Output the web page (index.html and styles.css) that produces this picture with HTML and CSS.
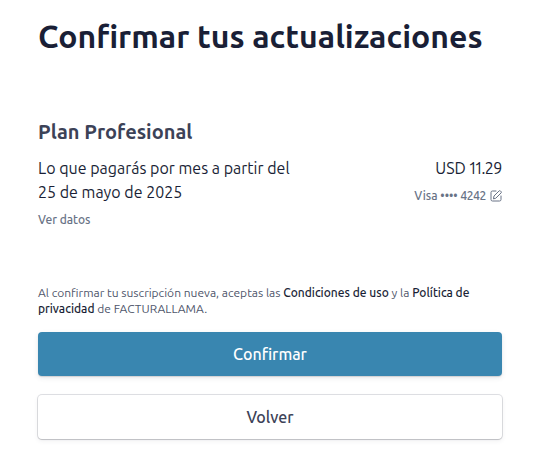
FILE: index.html
```html
<!DOCTYPE html>
<html lang="es">
<head>
    <meta charset="UTF-8">
    <meta name="viewport" content="width=device-width, initial-scale=1.0">
    <title>Confirmar tus actualizaciones</title>
    <link rel="stylesheet" href="styles.css">
</head>
<body>

<main class="container">
    <h1>Confirmar tus actualizaciones</h1>

    <section class="plan">
        <h2>Plan Profesional</h2>
        <div class="plan-row">
            <div class="plan-info">
                <p class="plan-text">Lo que pagarás por mes a partir del 25 de mayo de 2025</p>
                <a class="small-link" href="#datos">Ver datos</a>
            </div>
            <div class="plan-price">
                <p class="plan-text">USD 11.29</p>
                <a class="small-link card-link" href="#tarjeta">
                    <span>Visa •••• 4242</span>
                    <svg class="edit-icon" viewBox="0 0 24 24" aria-hidden="true">
                        <path d="M12 2H5a3 3 0 0 0-3 3v14a3 3 0 0 0 3 3h14a3 3 0 0 0 3-3v-7"/>
                        <path d="M7 17l1-5L18 2a2 2 0 0 1 3 0l1 1a2 2 0 0 1 0 3L12 16z"/>
                    </svg>
                </a>
            </div>
        </div>
    </section>

    <p class="terms">Al confirmar tu suscripción nueva, aceptas las <a href="#condiciones">Condiciones de uso</a> y la <a href="#privacidad">Política de privacidad</a> de FACTURALLAMA.</p>

    <div class="actions">
        <button class="btn confirm-btn" type="button">Confirmar</button>
        <button class="btn back-btn" type="button">Volver</button>
    </div>
</main>

</body>
</html>
```
FILE: styles.css
```css
body {
    background-color: #fff;
    color: #1a1f36;
    font-family: Ubuntu, 'Noto Sans', sans-serif;
    margin: 0;
}

.container {
    padding: 16px 31px 24px 38px;
}

h1, h2, p {
    margin: 0;
}

h1 {
    font-size: 32px;
    font-weight: 600;
    line-height: 40px;
}

h2 {
    color: #3c4257;
    font-size: 20px;
    font-weight: 600;
    line-height: 28px;
}

a {
    color: #1a1f36;
    font-weight: 500;
    text-decoration: none;
}

.plan {
    margin-top: 62px;
}

.plan-row {
    display: flex;
    justify-content: space-between;
    gap: 24px;
    margin-top: 10px;
}

.plan-info {
    flex: 0 1 270px;
}

.plan-text {
    font-size: 16px;
    font-weight: 400;
    line-height: 24px;
}

.plan-price {
    font-variant-numeric: proportional-nums;
    text-align: right;
}

.small-link {
    color: #697386;
    display: inline-block;
    font-size: 12px;
    line-height: 16px;
    margin-top: 8px;
}

.card-link {
    display: flex;
    align-items: center;
    justify-content: flex-end;
    gap: 4px;
}

.edit-icon {
    width: 12px;
    height: 12px;
    fill: none;
    stroke: #697386;
    stroke-width: 2px;
    stroke-linecap: round;
    stroke-linejoin: round;
}

.terms {
    color: #4f566b;
    font-size: 12px;
    font-weight: 400;
    line-height: 16px;
    margin-top: 57px;
}

.actions {
    display: grid;
    gap: 19px;
    margin-top: 15px;
}

.btn {
    border: none;
    border-radius: 4px;
    cursor: pointer;
    font-family: inherit;
    font-size: 16px;
    font-weight: 500;
    line-height: 24px;
    padding: 10px 16px;
}

.confirm-btn {
    background-color: #3986b0;
    box-shadow: 0 1px 1px rgba(0, 0, 0, 0.12), 0 2px 5px rgba(60, 66, 87, 0.12);
    color: #fff;
}

.back-btn {
    background-color: #fff;
    box-shadow: 0 0 0 1px rgba(60, 66, 87, 0.16), 0 1px 1px rgba(0, 0, 0, 0.12), 0 2px 5px rgba(60, 66, 87, 0.08);
    color: #3c4257;
}
```
